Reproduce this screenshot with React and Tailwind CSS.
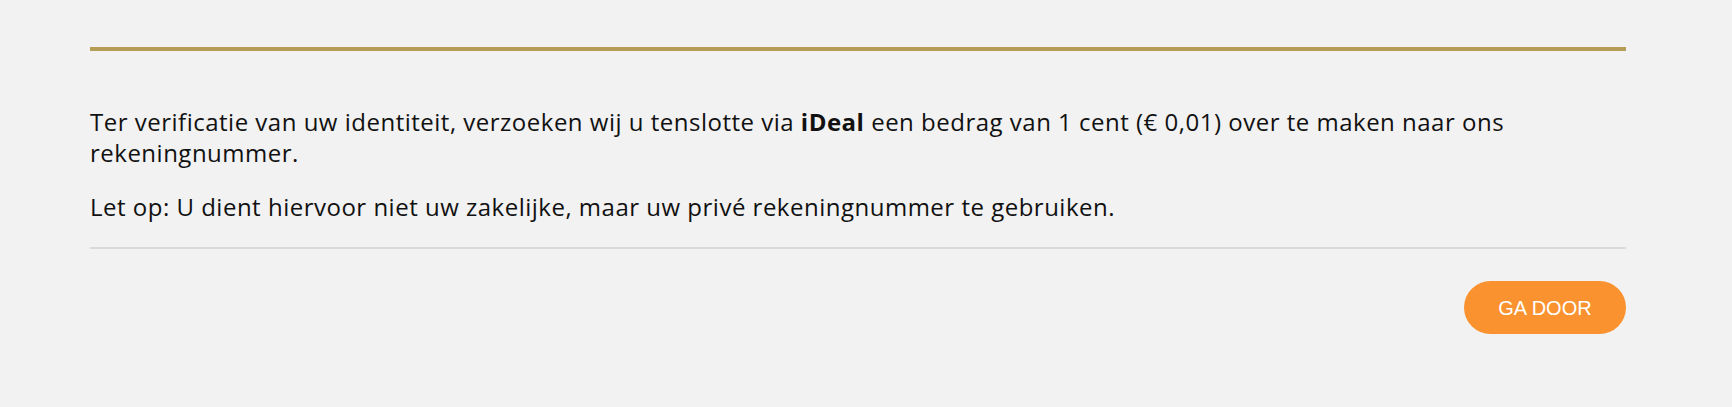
import React from 'react';

export default function App() {
  return (
    <div className="min-h-screen w-full bg-[#f2f2f2] text-[#111111]" style={{ fontFamily: '"Open Sans", "Noto Sans", sans-serif' }}>
      <div className="ml-[90px] w-[1536px] pt-[47px] pb-[73px]">
        {/* gold divider */}
        <div className="h-[4px] w-full bg-[#b59d55]" />

        {/* body copy */}
        <div className="mt-[55px] text-[24px] leading-[31px] tracking-[0.5px]">
          <p>
            Ter verificatie van uw identiteit, verzoeken wij u tenslotte via <strong className="font-bold">iDeal</strong> een bedrag van 1 cent (€ 0,01) over te maken naar ons rekeningnummer.
          </p>
          <p className="mt-[23px]">
            Let op: U dient hiervoor niet uw zakelijke, maar uw privé rekeningnummer te gebruiken.
          </p>
        </div>

        <div className="mt-[25px] h-[2px] w-full bg-[#d9d9d9]" />

        <div className="mt-[32px] flex justify-end">
          <button
            className="h-[53px] w-[162px] rounded-full bg-[#f9922f] text-[20px] text-white"
            style={{ fontFamily: '"Liberation Sans", Arial, sans-serif' }}
          >
            GA DOOR
          </button>
        </div>
      </div>
    </div>
  );
}
